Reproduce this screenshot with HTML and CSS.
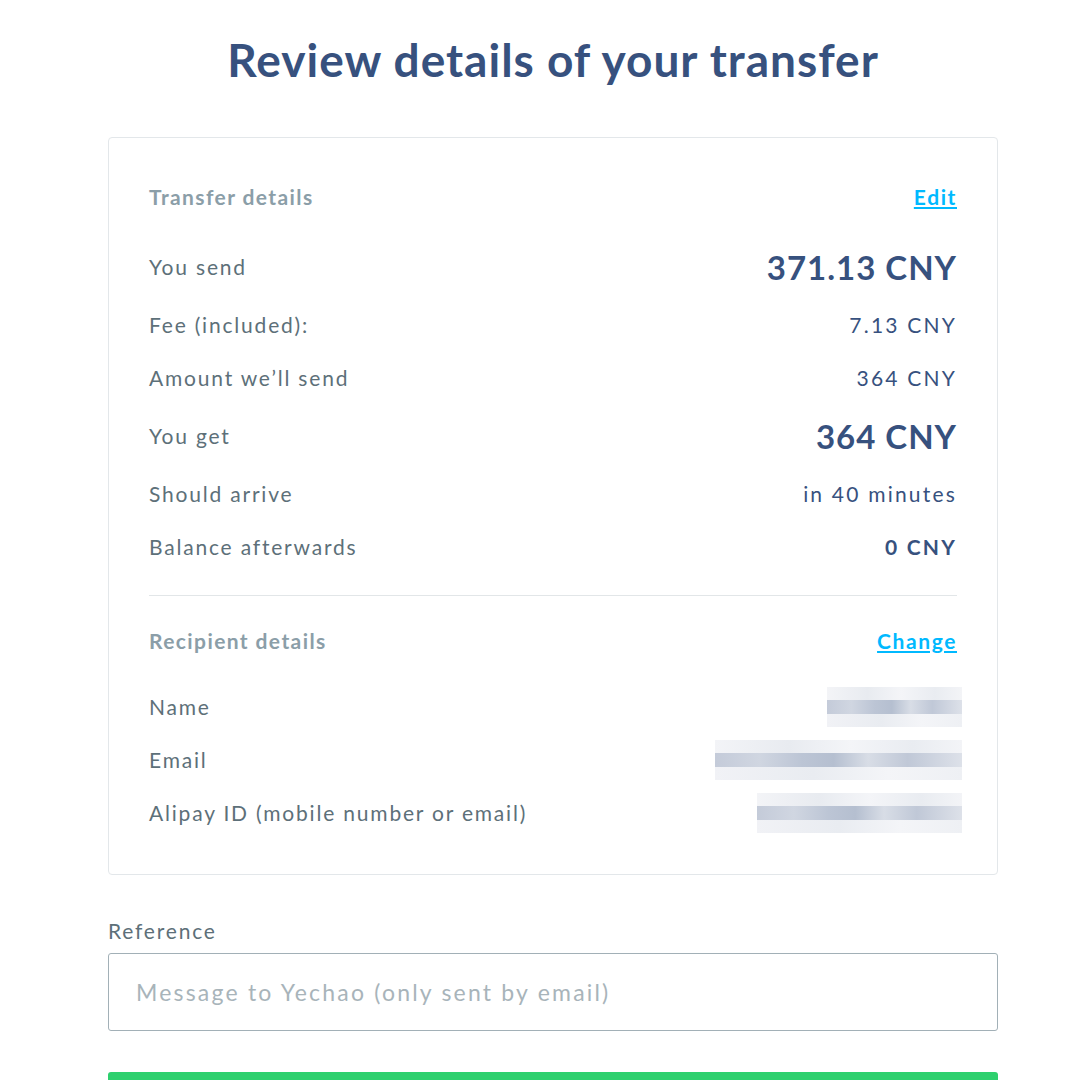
FILE: index.html
```html
<!DOCTYPE html>
<html lang="en">
<head>
    <meta charset="UTF-8">
    <title>Review details of your transfer</title>
    <link rel="stylesheet" href="styles.css">
</head>
<body>
    <div class="page">
        <h1>Review details of your transfer</h1>

        <div class="review-card">
            <div class="section-head">
                <span>Transfer details</span>
                <a href="#" class="link">Edit</a>
            </div>
            <div class="row big">
                <span class="label">You send</span>
                <span class="value">371.13 CNY</span>
            </div>
            <div class="row">
                <span class="label">Fee (included):</span>
                <span class="value">7.13 CNY</span>
            </div>
            <div class="row">
                <span class="label">Amount we’ll send</span>
                <span class="value">364 CNY</span>
            </div>
            <div class="row big">
                <span class="label">You get</span>
                <span class="value">364 CNY</span>
            </div>
            <div class="row">
                <span class="label">Should arrive</span>
                <span class="value">in 40 minutes</span>
            </div>
            <div class="row">
                <span class="label">Balance afterwards</span>
                <span class="value strong">0 CNY</span>
            </div>

            <hr class="divider">

            <div class="section-head">
                <span>Recipient details</span>
                <a href="#" class="link">Change</a>
            </div>
            <div class="row">
                <span class="label">Name</span>
                <span class="masked name"></span>
            </div>
            <div class="row">
                <span class="label">Email</span>
                <span class="masked email"></span>
            </div>
            <div class="row">
                <span class="label">Alipay ID (mobile number or email)</span>
                <span class="masked alipay"></span>
            </div>
        </div>

        <label class="field-label" for="reference">Reference</label>
        <input class="field" id="reference" type="text" placeholder="Message to Yechao (only sent by email)">

        <!-- only the top edge of the confirm button is in view -->
        <button class="confirm" type="button" aria-label="Confirm and continue"></button>
    </div>
</body>
</html>
```

FILE: styles.css
```css
body {
    margin: 0;
    font-family: 'Lato', 'Noto Sans', sans-serif;
    background-color: white;
    color: #5d7079;
    overflow: hidden;
}

.page {
    width: 890px;
    margin-left: 108px;
}

h1 {
    margin: 0;
    padding-top: 32px;
    height: 137px;
    box-sizing: border-box;
    text-align: center;
    font-size: 46px;
    font-weight: 700;
    line-height: 56px;
    letter-spacing: 1px;
    color: #37517e;
}

.review-card {
    border: 1px solid #e3e7ea;
    border-radius: 4px;
    padding: 40px 40px 35px 40px;
}

.section-head {
    display: flex;
    align-items: center;
    justify-content: space-between;
    height: 36px;
    margin-bottom: 22px;
    font-size: 21px;
    font-weight: 700;
    letter-spacing: 1.4px;
    color: #8b9ea8;
}

.section-head:first-child {
    margin-bottom: 21px;
}

.link {
    color: #00b9ff;
    text-decoration: underline;
    font-weight: 700;
    letter-spacing: 1.6px;
}

.row {
    display: flex;
    align-items: center;
    justify-content: space-between;
    height: 53px;
    font-size: 21px;
    letter-spacing: 1.8px;
}

.row.big {
    height: 63px;
}

.value {
    color: #37517e;
    letter-spacing: 2.2px;
}

.row.big .value {
    font-size: 33px;
    font-weight: 700;
    letter-spacing: 1px;
}

.value.strong {
    font-weight: 700;
}

.divider {
    border: none;
    border-top: 1px solid #e2e6e8;
    margin: 22px 0 26px 0;
}

/* blurred recipient values */
.masked {
    display: block;
    height: 40px;
    margin-right: -5px;
    background:
        linear-gradient(90deg, #f3f4f7 0%, #e8ebf0 30%, #f4f5f8 55%, #e9ecf1 80%, #f3f4f7 100%) top / 100% 13px no-repeat,
        linear-gradient(90deg, #f1f2f6 0%, #e9ecf1 40%, #f4f5f8 70%, #eef0f4 100%) bottom / 100% 13px no-repeat,
        linear-gradient(90deg, #c4cbd9 0%, #d0d6e1 18%, #bcc5d5 35%, #b5bfd0 48%, #d8dde6 62%, #c0c8d7 78%, #dde1e9 100%) center / 100% 14px no-repeat;
}

.masked.name {
    width: 135px;
}

.masked.email {
    width: 247px;
}

.masked.alipay {
    width: 205px;
}

.field-label {
    display: block;
    margin-top: 44px;
    font-size: 21px;
    line-height: 24px;
    letter-spacing: 1.8px;
    color: #5d7079;
}

.field {
    display: block;
    box-sizing: border-box;
    width: 100%;
    height: 78px;
    margin-top: 10px;
    padding: 0 27px;
    border: 1px solid #a2b0b7;
    border-radius: 3px;
    font-family: inherit;
    font-size: 23px;
    letter-spacing: 2.2px;
    color: #37517e;
}

.field::placeholder {
    color: #a8b4ba;
}

.confirm {
    display: block;
    width: 100%;
    height: 8px;
    margin-top: 41px;
    border: none;
    border-radius: 3px 3px 0 0;
    background-color: #2ed06e;
}
```
